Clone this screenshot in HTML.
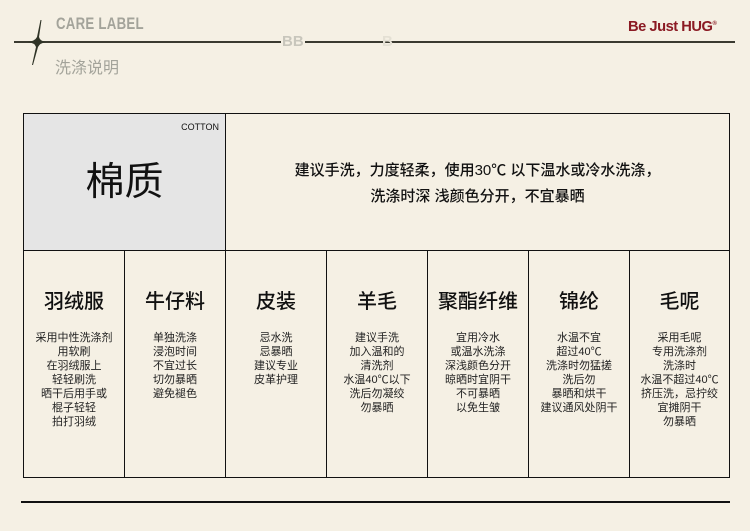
<!DOCTYPE html>
<html><head><meta charset="utf-8"><style>
*{margin:0;padding:0;box-sizing:border-box}
body{width:750px;height:531px;background:#f5f0e4;position:relative;overflow:hidden;font-family:"Liberation Sans","Noto Sans CJK SC",sans-serif;color:#111}
.abs{position:absolute}
.cell{position:absolute;border:1px solid #111;text-align:center}
.t{position:absolute;left:0;right:0;top:38px;font-size:20px;line-height:26px;font-weight:500}
.d{position:absolute;left:-5px;right:-5px;top:80px;font-size:11px;line-height:14px;color:#222}
</style></head><body>
<div class="abs" style="left:14px;top:41px;width:721px;height:2px;background:#3a3a30"></div>
<svg class="abs" style="left:26px;top:18px" width="22" height="48" viewBox="0 0 22 48"><path d="M15.5 2 L14.5 2 L11 19 Q9 23 2 24 Q9 25 10 29 L6 47 L7 47 L12 29 Q14 25 20 24 Q14 23 13 19Z" fill="#2f3326"/></svg>
<div class="abs" style="left:56px;top:14px;font-size:17px;font-weight:bold;color:#a3a39a;transform:scaleX(.78);transform-origin:left;letter-spacing:.3px">CARE LABEL</div>
<div class="abs" style="left:55px;top:54px;font-size:16px;color:#a3a39a">洗涤说明</div>
<div class="abs" style="left:281px;top:33px;font-size:15px;font-weight:bold;color:#c8c6bc;background:#f5f0e4;padding:0 1px">BB</div>
<div class="abs" style="left:382px;top:33px;font-size:15px;font-weight:bold;color:#e4e0d4">B</div>
<div class="abs" style="left:628px;top:18px;font-size:15px;font-weight:bold;color:#8b1a23;letter-spacing:-.5px;transform:scaleX(.98);transform-origin:left">Be Just HUG<sup style="font-size:6px">®</sup></div>
<div class="cell" style="left:23px;top:113px;width:203px;height:138px;background:#e5e5e5">
<div class="abs" style="right:6px;top:8px;font-size:9px">COTTON</div>
<div class="abs" style="left:0;right:0;top:46px;font-size:39px;line-height:46px">棉质</div></div>
<div class="cell" style="left:225px;top:113px;width:505px;height:138px">
<div class="abs" style="left:0;right:0;top:44px;font-size:15px;line-height:26px;font-weight:500">建议手洗，力度轻柔，使用30℃ 以下温水或冷水洗涤，<br>洗涤时深 浅颜色分开，不宜暴晒</div></div>
<div class="cell" style="left:23px;top:250px;width:102px;height:228px"><div class="t">羽绒服</div><div class="d">采用中性洗涤剂<br>用软刷<br>在羽绒服上<br>轻轻刷洗<br>晒干后用手或<br>棍子轻轻<br>拍打羽绒</div></div>
<div class="cell" style="left:124px;top:250px;width:102px;height:228px"><div class="t">牛仔料</div><div class="d">单独洗涤<br>浸泡时间<br>不宜过长<br>切勿暴晒<br>避免褪色</div></div>
<div class="cell" style="left:225px;top:250px;width:102px;height:228px"><div class="t">皮装</div><div class="d">忌水洗<br>忌暴晒<br>建议专业<br>皮革护理</div></div>
<div class="cell" style="left:326px;top:250px;width:102px;height:228px"><div class="t">羊毛</div><div class="d">建议手洗<br>加入温和的<br>清洗剂<br>水温40℃以下<br>洗后勿凝绞<br>勿暴晒</div></div>
<div class="cell" style="left:427px;top:250px;width:102px;height:228px"><div class="t">聚酯纤维</div><div class="d">宜用冷水<br>或温水洗涤<br>深浅颜色分开<br>晾晒时宜阴干<br>不可暴晒<br>以免生皱</div></div>
<div class="cell" style="left:528px;top:250px;width:102px;height:228px"><div class="t">锦纶</div><div class="d">水温不宜<br>超过40℃<br>洗涤时勿猛搓<br>洗后勿<br>暴晒和烘干<br>建议通风处阴干</div></div>
<div class="cell" style="left:629px;top:250px;width:101px;height:228px"><div class="t">毛呢</div><div class="d">采用毛呢<br>专用洗涤剂<br>洗涤时<br>水温不超过40℃<br>挤压洗，忌拧绞<br>宜摊阴干<br>勿暴晒</div></div>
<div class="abs" style="left:21px;top:501px;width:709px;height:2px;background:#111"></div>
</body></html>
